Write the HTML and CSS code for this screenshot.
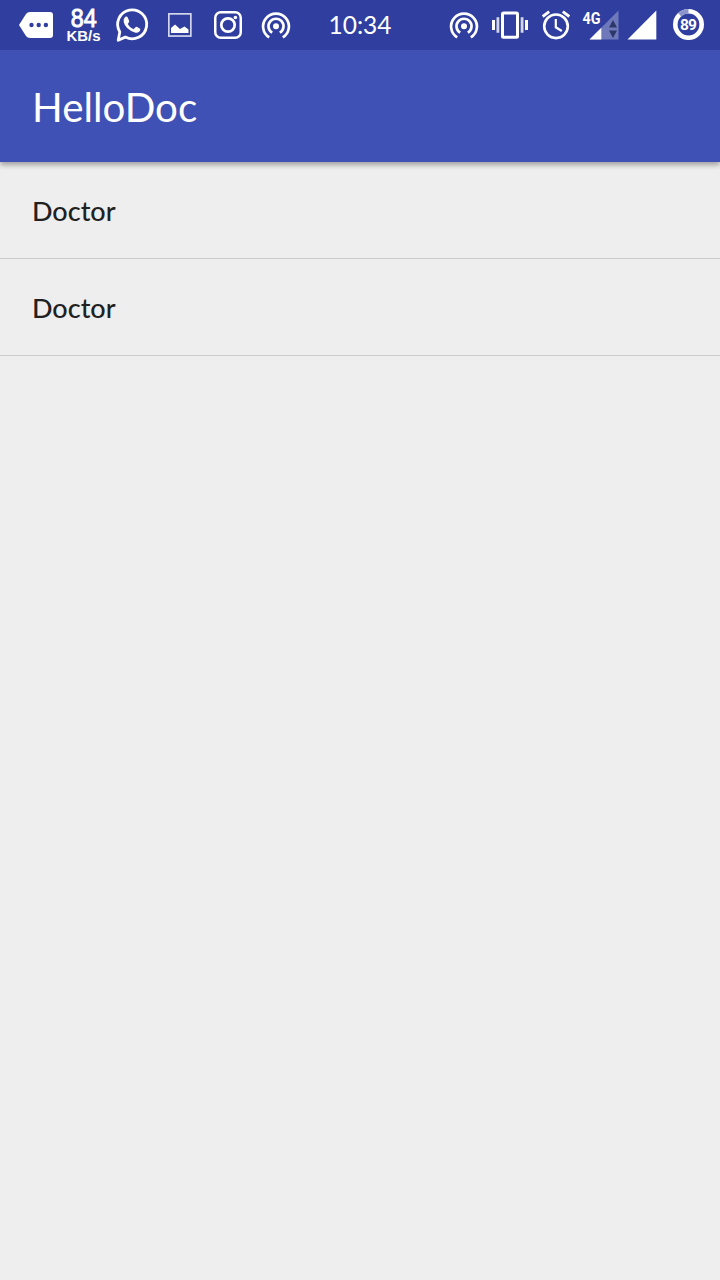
FILE: index.html
```html
<!DOCTYPE html>
<html lang="en">
<head>
<meta charset="utf-8">
<title>HelloDoc</title>
<link rel="stylesheet" href="styles.css">
</head>
<body>
<div class="screen">
  <div class="status-bar">
    <div class="icons icons-left">
      <svg class="icon" width="48" height="50" viewBox="12 0 48 50">
        <path class="fill" d="M19 25 26 14Q27.500 12 30 12H50Q53 12 53 15V35Q53 38 50 38H30Q27.500 38 26 36Z"/>
        <circle class="hole" cx="31.500" cy="25" r="2.200"/><circle class="hole" cx="38.700" cy="25" r="2.200"/><circle class="hole" cx="45.900" cy="25" r="2.200"/>
      </svg>
      <svg class="icon" width="48" height="50" viewBox="60 0 48 50">
        <text class="speed" x="70.800" y="27" textLength="26" lengthAdjust="spacingAndGlyphs">84</text>
        <text class="unit" x="66.500" y="41.300" textLength="34" lengthAdjust="spacingAndGlyphs">KB/s</text>
      </svg>
      <svg class="icon" width="48" height="50" viewBox="108 0 48 50">
        <path class="line" stroke-width="2.800" stroke-linejoin="round" d="M118.200 40.200 119.800 31.900A14.500 14.500 0 1 1 125.300 37.100Z"/>
        <path class="fill" d="M125.300 16.800Q126.600 16 127.500 17L129.200 21Q129.500 22 127.700 24Q129.500 27.500 133.500 29.300L135.500 27.200Q136.200 26.600 137.200 27.100L140 28.700Q140.700 29.600 139.900 31.100Q137.900 33.500 134.900 32.400Q125.500 29.500 123.700 22Q123.200 18.500 125.300 16.800Z"/>
      </svg>
      <svg class="icon" width="48" height="50" viewBox="156 0 48 50">
        <rect class="line soft" stroke-width="1.700" x="168.850" y="13.850" width="22" height="22.200"/>
        <path class="fill" d="M171 33V28L175 24.500 180 29 184.500 26.500 188.500 29.500V33Z"/>
      </svg>
      <svg class="icon" width="48" height="50" viewBox="204 0 48 50">
        <rect class="line" stroke-width="2.500" x="215.250" y="12.250" width="25.500" height="25.500" rx="5.500"/>
        <circle class="line" stroke-width="2.700" cx="228" cy="25" r="6.700"/>
        <circle class="fill" cx="235.400" cy="17.500" r="1.800"/>
      </svg>
      <svg class="icon" width="48" height="50" viewBox="252 0 48 50">
        <circle class="fill" cx="276" cy="26.200" r="3"/>
        <path class="line" stroke-width="2.700" d="M272.200 32.700A7.500 7.500 0 1 1 279.800 32.700M269.200 37.400A12.900 12.900 0 1 1 282.800 37.400"/>
      </svg>
    </div>
    <div class="clock">10:34</div>
    <div class="icons icons-right">
      <svg class="icon" width="46" height="50" viewBox="441 0 46 50">
        <circle class="fill" cx="464" cy="26.200" r="3"/>
        <path class="line" stroke-width="2.700" d="M460.200 32.700A7.500 7.500 0 1 1 467.800 32.700M457.200 37.400A12.900 12.900 0 1 1 470.800 37.400"/>
      </svg>
      <svg class="icon" width="46" height="50" viewBox="487 0 46 50">
        <rect class="line" stroke-width="3" x="502.500" y="13" width="15" height="24.200" rx="1"/>
        <path class="line" stroke-width="3" d="M493.500 20V30M526.500 20V30"/>
        <path class="line soft" stroke-width="2.800" d="M497.900 17.200V32.800M522.100 17.200V32.800"/>
      </svg>
      <svg class="icon" width="46" height="50" viewBox="533 0 46 50">
        <circle class="line" stroke-width="2.600" cx="556" cy="26.300" r="11.800"/>
        <path class="line" stroke-width="2.200" d="M555.800 19V27.300L561.800 31"/>
        <path class="line" stroke-width="2.800" d="M542.700 16.500 549.200 11.700M562.800 11.700 569.300 16.500"/>
      </svg>
      <svg class="icon" width="46" height="50" viewBox="579 0 46 50">
        <path class="weak" d="M618.500 10.500V39.500H589.500Z"/>
        <path class="fill" d="M601.300 27.700V39.500H589.500Z"/>
        <path class="arrows" d="M613 20 617 27.500H609ZM609 30.500H617L613 38Z"/>
        <text class="network" x="582.500" y="23.500" textLength="18" lengthAdjust="spacingAndGlyphs">4G</text>
      </svg>
      <svg class="icon" width="40" height="50" viewBox="625 0 40 50">
        <path class="fill" d="M656.300 10.500V39.500H627.500Z"/>
      </svg>
      <svg class="icon" width="46" height="50" viewBox="665 0 46 50">
        <circle class="line" stroke-width="4.600" cx="688.500" cy="24.500" r="13.200"/>
        <path class="battery-used" d="M688.500 11.300A13.200 13.200 0 0 0 679.700 14.700"/>
        <text class="battery" x="680" y="29.800" textLength="17">89</text>
      </svg>
    </div>
  </div>
  <header class="app-bar"><h1 class="title">HelloDoc</h1></header>
  <ul class="list">
    <li class="row">Doctor</li>
    <li class="row">Doctor</li>
  </ul>
</div>
</body>
</html>
```
FILE: styles.css
```css
body {
  margin: 0;
  font-family: Lato, sans-serif;
  background: #eeeeee;
}

.screen {
  display: flex;
  flex-direction: column;
  min-height: 1280px;
}

.status-bar {
  position: relative;
  z-index: 1;
  display: flex;
  justify-content: space-between;
  height: 50px;
  padding: 0 9px 0 12px;
  background: #303f9f;
  color: #ffffff;
}

.icons {
  display: flex;
}

.icon {
  display: block;
}

.clock {
  padding-right: 21px;
  flex: 1;
  text-align: center;
  font-size: 24.5px;
  line-height: 49px;
}

.fill {
  fill: #ffffff;
}

.hole {
  fill: #303f9f;
}

.line {
  fill: none;
  stroke: #ffffff;
}

.soft {
  stroke: #d3d6eb;
}

.weak {
  fill: #6e79bc;
}

.arrows {
  fill: #2d3768;
}

.battery-used {
  fill: none;
  stroke: #8d96ca;
  stroke-width: 4.6px;
}

.speed,
.unit,
.network,
.battery {
  fill: #ffffff;
  font-family: Roboto, sans-serif;
  font-weight: 700;
}

.speed {
  font-family: "Liberation Sans", sans-serif;
  font-size: 25px;
  font-weight: 400;
  stroke: #ffffff;
  stroke-width: 0.9px;
}

.unit {
  font-family: "Liberation Sans", sans-serif;
  font-size: 14px;
}

.network {
  font-size: 16px;
}

.battery {
  font-size: 15.5px;
}

.app-bar {
  display: flex;
  align-items: center;
  height: 112px;
  padding: 0 32px;
  background: #3f51b5;
  box-shadow: 0 3px 5px rgba(0, 0, 0, 0.32);
}

.title {
  margin: 2px 0 0;
  color: #ffffff;
  font-size: 40.3px;
  font-weight: 400;
  line-height: 50px;
}

.list {
  margin: 0;
  padding: 0;
  list-style: none;
}

.row {
  height: 96px;
  padding: 0 32px;
  border-bottom: 1px solid #cccccc;
  color: #212121;
  font-size: 27px;
  font-weight: 500;
  line-height: 98px;
}
```
